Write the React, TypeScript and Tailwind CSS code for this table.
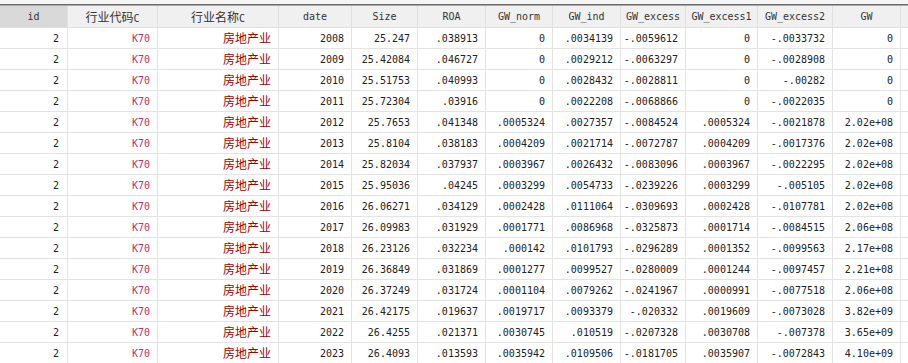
import React from "react";

const widths = [68, 90, 121, 73, 66, 68, 67, 68, 65, 72, 75, 68];
const headers = ["id", "行业代码C", "行业名称C", "date", "Size", "ROA", "GW_norm", "GW_ind", "GW_excess", "GW_excess1", "GW_excess2", "GW"];

const rows: string[][] = [
  ["2008", "25.247", ".038913", "0", ".0034139", "-.0059612", "0", "-.0033732", "0"],
  ["2009", "25.42084", ".046727", "0", ".0029212", "-.0063297", "0", "-.0028908", "0"],
  ["2010", "25.51753", ".040993", "0", ".0028432", "-.0028811", "0", "-.00282", "0"],
  ["2011", "25.72304", ".03916", "0", ".0022208", "-.0068866", "0", "-.0022035", "0"],
  ["2012", "25.7653", ".041348", ".0005324", ".0027357", "-.0084524", ".0005324", "-.0021878", "2.02e+08"],
  ["2013", "25.8104", ".038183", ".0004209", ".0021714", "-.0072787", ".0004209", "-.0017376", "2.02e+08"],
  ["2014", "25.82034", ".037937", ".0003967", ".0026432", "-.0083096", ".0003967", "-.0022295", "2.02e+08"],
  ["2015", "25.95036", ".04245", ".0003299", ".0054733", "-.0239226", ".0003299", "-.005105", "2.02e+08"],
  ["2016", "26.06271", ".034129", ".0002428", ".0111064", "-.0309693", ".0002428", "-.0107781", "2.02e+08"],
  ["2017", "26.09983", ".031929", ".0001771", ".0086968", "-.0325873", ".0001714", "-.0084515", "2.06e+08"],
  ["2018", "26.23126", ".032234", ".000142", ".0101793", "-.0296289", ".0001352", "-.0099563", "2.17e+08"],
  ["2019", "26.36849", ".031869", ".0001277", ".0099527", "-.0280009", ".0001244", "-.0097457", "2.21e+08"],
  ["2020", "26.37249", ".031724", ".0001104", ".0079262", "-.0241967", ".0000991", "-.0077518", "2.06e+08"],
  ["2021", "26.42175", ".019637", ".0019717", ".0093379", "-.020332", ".0019609", "-.0073028", "3.82e+09"],
  ["2022", "26.4255", ".021371", ".0030745", ".010519", "-.0207328", ".0030708", "-.007378", "3.65e+09"],
  ["2023", "26.4093", ".013593", ".0035942", ".0109506", "-.0181705", ".0035907", "-.0072843", "4.10e+09"],
];

const mono = "font-['DejaVu_Sans_Mono','Liberation_Mono',monospace] text-[10px]";
const cjk = "font-['Noto_Sans_CJK_SC','Noto_Sans',sans-serif] text-[12px]";

function HeaderLabel({ text }: { text: string }) {
  const m = text.match(/^([\u4e00-\u9fff]+)(C)$/);
  if (m) {
    return (
      <span className="flex items-baseline">
        <span className={cjk}>{m[1]}</span>
        <span className={mono}>{m[2]}</span>
      </span>
    );
  }
  return <span className={mono}>{text}</span>;
}

export default function App() {
  return (
    <div className="w-[908px] h-[363px] overflow-hidden bg-white text-[#222]">
      <div className="h-[4px] bg-[#f5f5f5]" />
      <div className="h-[1px] bg-[#6b6b6b]" />
      <div className="h-[1px] bg-[#a8a8a8]" />
      <div className="flex h-[22px]">
        {headers.map((h, i) => (
          <div
            key={h}
            style={{ width: widths[i] }}
            className={`shrink-0 flex items-center justify-center border-r border-b border-[#e0e0e0] text-[#333] ${i === 0 ? "bg-[#d9d9d9]" : "bg-[#f0f0f0]"}`}
          >
            <HeaderLabel text={h} />
          </div>
        ))}
        <div className="flex-1 border-b border-[#e0e0e0] bg-[#f0f0f0]" />
      </div>
      {rows.map((r) => (
        <div key={r[0]} className="flex h-[21px]">
          <div style={{ width: widths[0] }} className={`shrink-0 flex items-center justify-end pr-[8px] border-r border-b border-[#e3e3e3] ${mono}`}>2</div>
          <div style={{ width: widths[1] }} className={`shrink-0 flex items-center justify-end pr-[7px] border-r border-b border-[#e3e3e3] text-[#c0306a] ${mono}`}>K70</div>
          <div style={{ width: widths[2] }} className={`shrink-0 flex items-center justify-end pr-[7px] border-r border-b border-[#e3e3e3] text-[#a80000] ${cjk}`}>房地产业</div>
          {r.map((v, j) => (
            <div
              key={j}
              style={{ width: widths[j + 3] }}
              className={`shrink-0 flex items-center justify-end pr-[7px] border-r border-b border-[#e3e3e3] ${mono}`}
            >
              {v}
            </div>
          ))}
          <div className="flex-1 border-b border-[#e3e3e3]" />
        </div>
      ))}
    </div>
  );
}
